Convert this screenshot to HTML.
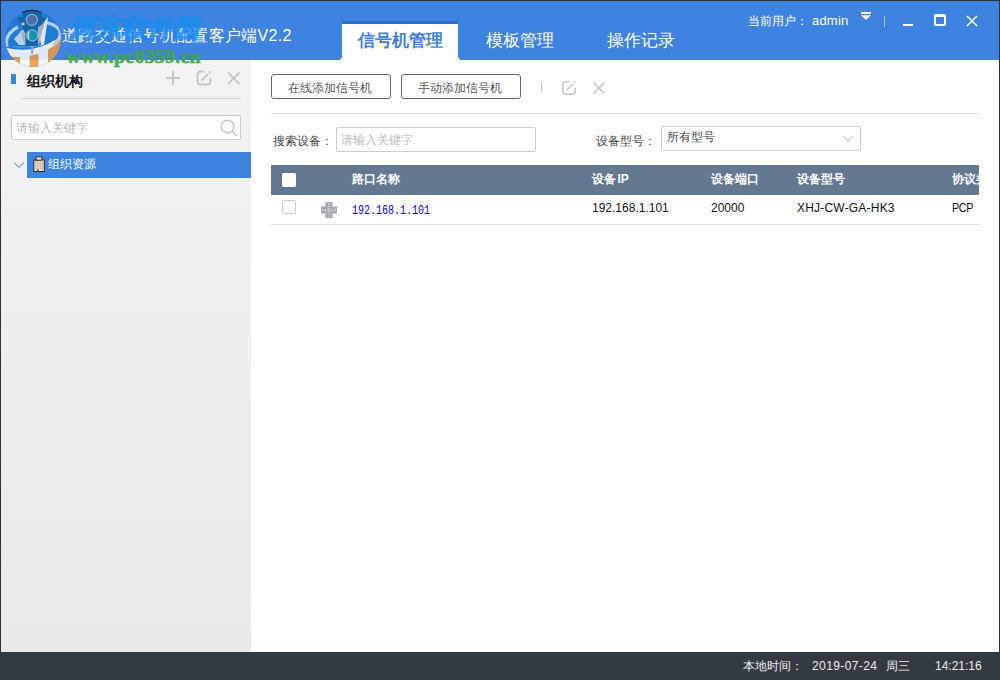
<!DOCTYPE html>
<html><head><meta charset="utf-8">
<style>
*{margin:0;padding:0;box-sizing:border-box}
html,body{width:1000px;height:680px;overflow:hidden;background:#fff;font-family:"Liberation Sans",sans-serif}
.abs{position:absolute}
#win{position:absolute;left:0;top:0;width:1000px;height:680px;background:#fff}
#bord{position:absolute;left:0;top:0;width:1000px;height:652px;border:1px solid #2e3135;border-bottom:none;pointer-events:none;z-index:50}
#title{position:absolute;left:0;top:0;width:1000px;height:60px;background:#3e83df}
#side{position:absolute;left:1px;top:60px;width:250px;height:592px;background:linear-gradient(#f3f3f3,#e9e9e9)}
#foot{position:absolute;left:0;top:652px;width:1000px;height:28px;background:#343a42;color:#eee;font-size:12px}
.t{position:absolute;white-space:nowrap;line-height:1}
</style></head><body>
<div id="win">
  <div id="title">
    <div class="t" style="left:62px;top:28px;font-size:16px;letter-spacing:0.3px;color:#fff">道路交通信号机配置客户端V2.2</div>
    <div class="abs" style="left:342px;top:21px;width:116px;height:39px;background:#fff;border-top:3px solid #2d6fcc"></div>
    <div class="abs" style="left:339px;top:57px;width:3px;height:3px;background:radial-gradient(circle at 0 0,#3e83df 2.5px,#fff 3px)"></div>
    <div class="abs" style="left:458px;top:57px;width:3px;height:3px;background:radial-gradient(circle at 100% 0,#3e83df 2.5px,#fff 3px)"></div>
    <svg class="abs" style="left:858px;top:10px" width="16" height="12" viewBox="0 0 16 12"><rect x="3" y="2" width="10" height="2" fill="#fff"/><path d="M3 5.2 H13 L8 10 Z" fill="#fff"/></svg>
    <div class="abs" style="left:884px;top:16px;width:1px;height:11px;background:#c9c2b8"></div>
    <div class="abs" style="left:903px;top:24px;width:10px;height:2px;background:#fff"></div>
    <div class="abs" style="left:934px;top:14px;width:12px;height:12px;border:2px solid #fff;border-top-width:3px;border-radius:2px"></div>
    <svg class="abs" style="left:966px;top:15px" width="12" height="12" viewBox="0 0 12 12"><path d="M1 1 L11 11 M11 1 L1 11" stroke="#fff" stroke-width="1.6"/></svg>
    <div class="t" style="left:358px;top:32px;font-size:17px;font-weight:bold;color:#3f7fe0">信号机管理</div>
    <div class="t" style="left:486px;top:32px;font-size:17px;color:#fff">模板管理</div>
    <div class="t" style="left:607px;top:32px;font-size:17px;color:#fff">操作记录</div>
    <div class="t" style="left:748px;top:15px;font-size:12px;color:#fff">当前用户：</div><div class="t" style="left:812px;top:14px;font-size:13px;letter-spacing:0.2px;color:#fff">admin</div>
  </div>
  <div id="side">
    <div class="abs" style="left:10px;top:14px;width:5px;height:10px;background:#3e83df"></div>
    <div class="t" style="left:26px;top:14px;font-size:14px;font-weight:bold;color:#111">组织机构</div>
    <svg class="abs" style="left:163px;top:9px" width="18" height="18" viewBox="0 0 18 18"><path d="M9 2 V16 M2 9 H16" stroke="#c6c6c6" stroke-width="2"/></svg>
    <svg class="abs" style="left:194px;top:9px" width="18" height="18" viewBox="0 0 18 18"><path d="M9.5 2.5 H5.5 Q2.5 2.5 2.5 5.5 V12.5 Q2.5 15.5 5.5 15.5 H12.5 Q15.5 15.5 15.5 12.5 V9" fill="none" stroke="#c6c6c6" stroke-width="1.8"/><path d="M6.5 11.5 L13.2 4.8" stroke="#c6c6c6" stroke-width="1.8"/><circle cx="14.8" cy="3.2" r="1.1" fill="#c6c6c6"/></svg>
    <svg class="abs" style="left:224px;top:9px" width="18" height="18" viewBox="0 0 18 18"><path d="M3 3.5 L14.5 15 M14.5 3.5 L3 15" stroke="#c6c6c6" stroke-width="1.8"/></svg>
    <div class="abs" style="left:20px;top:38px;width:220px;height:1px;background:#d4d4d4"></div>
    <div class="abs" style="left:10px;top:55px;width:230px;height:25px;background:#fff;border:1px solid #cdcdcd;border-radius:2px"></div>
    <div class="t" style="left:15px;top:62px;font-size:12px;color:#bbb">请输入关键字</div>
    <svg class="abs" style="left:218px;top:58px" width="20" height="20" viewBox="0 0 20 20"><circle cx="8.5" cy="8.5" r="6.3" fill="none" stroke="#c4c4c4" stroke-width="1.5"/><path d="M13 13 L18 18" stroke="#c4c4c4" stroke-width="1.6"/></svg>
    <svg class="abs" style="left:12px;top:101px" width="12" height="8" viewBox="0 0 12 8"><path d="M1 1.5 L6 6.5 L11 1.5" fill="none" stroke="#7fa7d8" stroke-width="1.2"/></svg>
    <div class="abs" style="left:26px;top:92px;width:224px;height:26px;background:#3e83df"></div>
    <svg class="abs" style="left:31px;top:95px" width="16" height="18" viewBox="0 0 16 18"><rect x="1.8" y="5.1" width="10.6" height="11.4" fill="#efe6d6" stroke="#2e2e2e" stroke-width="1"/><rect x="4.1" y="1.9" width="5.8" height="3.2" fill="#f4ecdd" stroke="#2e2e2e" stroke-width="1"/><rect x="9.2" y="5.6" width="2.7" height="10.4" fill="#d8cfbe"/><rect x="3" y="6.6" width="1.6" height="1" fill="#b3a48b"/><rect x="5.2" y="6.6" width="1.6" height="1" fill="#b3a48b"/><rect x="7.4" y="6.6" width="1.6" height="1" fill="#b3a48b"/><rect x="10.1" y="6.6" width="1.6" height="1" fill="#b3a48b"/><rect x="3" y="8.6" width="1.6" height="1" fill="#b3a48b"/><rect x="5.2" y="8.6" width="1.6" height="1" fill="#b3a48b"/><rect x="7.4" y="8.6" width="1.6" height="1" fill="#b3a48b"/><rect x="10.1" y="8.6" width="1.6" height="1" fill="#b3a48b"/><rect x="3" y="10.6" width="1.6" height="1" fill="#b3a48b"/><rect x="5.2" y="10.6" width="1.6" height="1" fill="#b3a48b"/><rect x="7.4" y="10.6" width="1.6" height="1" fill="#b3a48b"/><rect x="10.1" y="10.6" width="1.6" height="1" fill="#b3a48b"/><rect x="3" y="12.6" width="1.6" height="1" fill="#b3a48b"/><rect x="5.2" y="12.6" width="1.6" height="1" fill="#b3a48b"/><rect x="7.4" y="12.6" width="1.6" height="1" fill="#b3a48b"/><rect x="10.1" y="12.6" width="1.6" height="1" fill="#b3a48b"/><rect x="4.6" y="14.2" width="2.4" height="2" fill="#8b7355"/></svg>
    <div class="t" style="left:47px;top:98px;font-size:12px;color:#fff">组织资源</div>
  </div>
  <div id="main">
    <div class="abs" style="left:271px;top:74px;width:120px;height:25px;border:1.5px solid #666;border-radius:3px"></div>
    <div class="t" style="left:288px;top:82px;font-size:12px;color:#555">在线添加信号机</div>
    <div class="abs" style="left:401px;top:74px;width:120px;height:25px;border:1.5px solid #666;border-radius:3px"></div>
    <div class="t" style="left:418px;top:82px;font-size:12px;color:#555">手动添加信号机</div>
    <div class="abs" style="left:541px;top:82px;width:1px;height:10px;background:#c4c4c4"></div>
    <svg class="abs" style="left:560px;top:79px" width="18" height="18" viewBox="0 0 18 18"><path d="M9.5 2.8 H5.5 Q2.8 2.8 2.8 5.5 V12.5 Q2.8 15.2 5.5 15.2 H12.5 Q15.2 15.2 15.2 12.5 V9" fill="none" stroke="#c8c8c8" stroke-width="1.6"/><path d="M6.5 11.5 L13 5" stroke="#c8c8c8" stroke-width="1.6"/><circle cx="14.6" cy="3.6" r="1" fill="#c8c8c8"/></svg>
    <svg class="abs" style="left:591px;top:81px" width="16" height="15" viewBox="0 0 16 15"><path d="M2.5 1.5 L13.5 12.5 M13.5 1.5 L2.5 12.5" stroke="#c8c8c8" stroke-width="1.7"/></svg>
    <div class="abs" style="left:271px;top:113px;width:708px;height:1px;background:#ddd"></div>
    <div class="t" style="left:273px;top:135px;font-size:12px;color:#444">搜索设备：</div>
    <div class="abs" style="left:336px;top:127px;width:200px;height:25px;border:1px solid #ccc;border-radius:2px"></div>
    <div class="t" style="left:341px;top:134px;font-size:12px;color:#bbb">请输入关键字</div>
    <div class="t" style="left:596px;top:135px;font-size:12px;color:#444">设备型号：</div>
    <div class="abs" style="left:661px;top:126px;width:200px;height:25px;border:1px solid #ccc;border-radius:2px"></div>
    <div class="t" style="left:667px;top:131px;font-size:12px;color:#444">所有型号</div>
    <svg class="abs" style="left:841px;top:134px" width="14" height="9" viewBox="0 0 14 9"><path d="M2.3 2.2 L7 6.9 L11.7 2.2" fill="none" stroke="#c4c4c4" stroke-width="1.1"/></svg>
    <div class="abs" style="left:271px;top:165px;width:708px;height:30px;background:#647891"></div>
    <div class="abs" style="left:282px;top:173px;width:14px;height:14px;background:#fff;border-radius:2px"></div>
    <div class="t" style="left:352px;top:173px;font-size:12px;font-weight:bold;color:#fff">路口名称</div>
    <div class="t" style="left:592px;top:173px;font-size:12px;font-weight:bold;color:#fff">设备<span style="margin-left:1.5px">IP</span></div>
    <div class="t" style="left:711px;top:173px;font-size:12px;font-weight:bold;color:#fff">设备端口</div>
    <div class="t" style="left:797px;top:173px;font-size:12px;font-weight:bold;color:#fff">设备型号</div>
    <div class="abs" style="left:952px;top:165px;width:27px;height:30px;overflow:hidden"><div class="t" style="left:0;top:8px;font-size:12px;font-weight:bold;color:#fff">协议类型</div></div>
    <div class="abs" style="left:282px;top:200px;width:14px;height:14px;background:#fff;border:1px solid #ccc;border-radius:2px"></div>
    <svg class="abs" style="left:321px;top:202px" width="16" height="16" viewBox="0 0 16 16"><path d="M4.5 0 H11.5 V4.5 H16 V11.5 H11.5 V16 H4.5 V11.5 H0 V4.5 H4.5 Z" fill="#a6aab6"/><path d="M8 1 V15 M1 8 H15" stroke="#e3e5ea" stroke-width="1" stroke-dasharray="1.4 1.2"/><path d="M4.5 0 V4.5 H0 M11.5 0 V4.5 H16 M0 11.5 H4.5 V16 M16 11.5 H11.5 V16" fill="none" stroke="#c9ccd4" stroke-width="1"/></svg>
    <div class="t" style="left:352px;top:205px;font-size:10px;letter-spacing:0px;color:#0000ff;font-family:'Liberation Mono',monospace;transform:scaleY(1.22);transform-origin:0 0">192.168.1.101</div>
    <div class="t" style="left:592px;top:202px;font-size:12px;color:#111">192.168.1.101</div>
    <div class="t" style="left:711px;top:202px;font-size:12px;color:#111">20000</div>
    <div class="t" style="left:797px;top:202px;font-size:12px;letter-spacing:0.2px;color:#111">XHJ-CW-GA-HK3</div>
    <div class="t" style="left:952px;top:202px;font-size:12px;letter-spacing:-0.4px;color:#111;transform:scaleX(0.9);transform-origin:0 0">PCP</div>
    <div class="abs" style="left:271px;top:224px;width:708px;height:1px;background:#ddd"></div>
  </div>
  <div id="foot">
    <div class="t" style="left:743px;top:8px">本地时间：</div>
    <div class="t" style="left:812px;top:8px;letter-spacing:0.4px">2019-07-24</div>
    <div class="t" style="left:886px;top:8px">周三</div>
    <div class="t" style="left:935px;top:8px">14:21:16</div>
  </div>
  <div class="t" style="left:68px;top:16px;font-size:26px;font-weight:bold;color:#1b8cec;opacity:0.8;font-family:'Liberation Serif',serif;-webkit-text-stroke:1.6px #1b8cec;transform:skewX(-14deg);transform-origin:0 100%;z-index:1">河东软件园</div>
  <div class="t" style="left:66px;top:48px;font-size:20px;letter-spacing:0.2px;font-weight:bold;color:#45a44a;opacity:0.92;font-family:'Liberation Serif',serif;-webkit-text-stroke:0.7px #45a44a;transform:scaleY(0.9);transform-origin:0 0;z-index:3">www.pc0359.cn</div>
  <svg class="abs" style="left:0;top:0;z-index:4" width="70" height="70" viewBox="0 0 70 70">
    <defs><clipPath id="cc"><circle cx="33.2" cy="39" r="28"/></clipPath></defs>
    <g opacity="0.88">
    <g clip-path="url(#cc)">
      <rect x="0" y="0" width="70" height="70" fill="#1b7ad2"/>
      <path d="M0 51 Q34 58 70 30 V70 H0 Z" fill="#e99a45"/>
      <path d="M0 46 Q30 56 55 40 L57 44 Q32 62 0 55 Z" fill="#fafbfd"/>
      <rect x="20" y="53" width="9.6" height="18" fill="#f4f7fc"/>
      <rect x="38.4" y="47" width="9.6" height="24" fill="#f4f7fc"/>
      <path d="M7 47 Q4 34 18 27" fill="none" stroke="#c4d9f4" stroke-width="3.2"/>
      <path d="M46 22.5 Q62 26 60 36 Q58 42 53 45" fill="none" stroke="#c4d9f4" stroke-width="3.2"/>
      <path d="M13 46.5 Q30 48 44 45" fill="none" stroke="#5fa6e6" stroke-width="1.2"/>
    </g>
    <path d="M14 39 L22 30 L27 31 L26 45 L19 45 Z" fill="#c9dcf4"/>
    <path d="M21 33 Q22 40 25 45 L28 45 L28 29 Z" fill="#b5b6c0"/>
    <path d="M48 17 L44 45 L41 45 L38 26 Z" fill="#f3f5fa"/>
    <path d="M46 19 Q41 34 39 45 L37 45 L37 24 Z" fill="#b5b6c0"/>
    <path d="M22 12.5 Q32 8.5 41.5 12.5 L42 17.5 L47.5 17.5 L41 25.5 L38 27 V46 H25.5 V33.5 L17 17.5 L22.5 17.5 Z" fill="#15609f"/>
    <path d="M22 12.5 Q32 8.5 41.5 12.5" fill="none" stroke="#1d2a44" stroke-width="1.3"/>
    <circle cx="31.8" cy="19.9" r="5.6" fill="#5a6898" stroke="#6bbde6" stroke-width="1.3"/>
    <circle cx="32.2" cy="35.4" r="5.6" fill="#14949f" stroke="#6bbde6" stroke-width="1.3"/>
    <path d="M28 31.5 Q26.5 35.4 28 39.3 L29.5 39.3 Q28.8 35.4 29.5 31.5 Z" fill="#b8e6d6"/>
    <rect x="31" y="46" width="2.2" height="8" fill="#a9aab4"/>
    <path d="M23 21.8 L23.7 23.3 L25.3 23.4 L24.1 24.4 L24.5 26 L23 25.1 L21.5 26 L21.9 24.4 L20.7 23.4 L22.3 23.3 Z" fill="#e6d8d2"/>
    </g>
  </svg>
  <div id="bord"></div>
</div>
</body></html>
